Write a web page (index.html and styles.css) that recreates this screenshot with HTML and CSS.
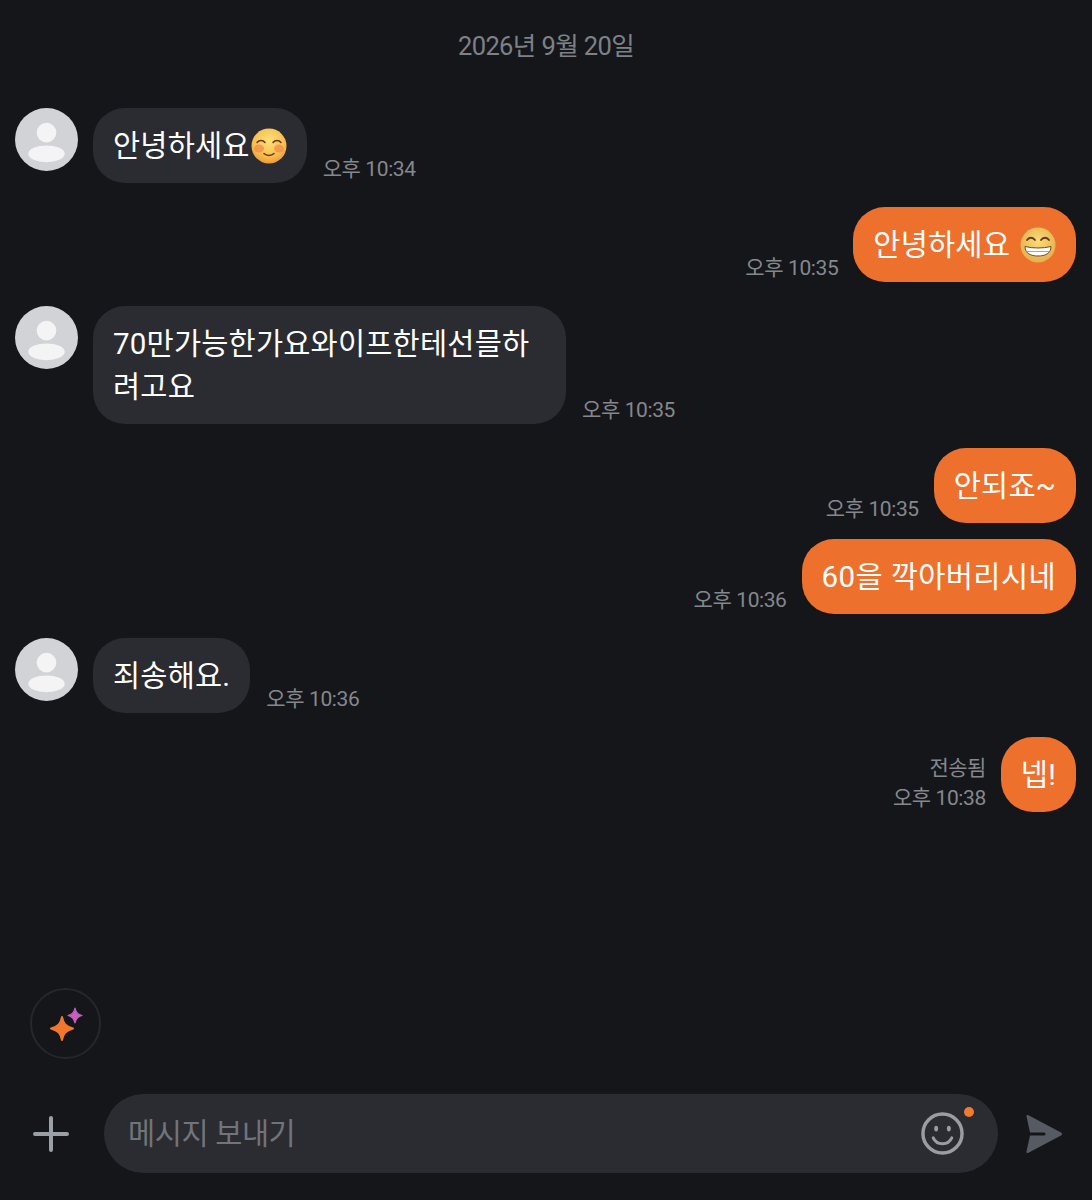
FILE: index.html
```html
<!DOCTYPE html>
<html lang="ko">
<head>
<meta charset="utf-8">
<title>채팅</title>
<link rel="stylesheet" href="styles.css">
</head>
<body>
<main class="chat">
  <div class="date">2026년 9월 20일</div>
  <section class="messages">
    <div class="row in">
      <svg class="avatar" viewBox="0 0 64 64"><circle cx="32" cy="32" r="32" fill="#d2d3d7"/><circle cx="32" cy="25" r="10" fill="#f4f4f5"/><ellipse cx="32" cy="46.500" rx="18.500" ry="8.500" fill="#f4f4f5"/></svg>
      <div class="bubble">안녕하세요<svg class="emoji" viewBox="0 0 36 36"><defs><radialGradient id="f1" cx="50%" cy="35%" r="65%"><stop offset="0" stop-color="#fde07a"/><stop offset=".7" stop-color="#f8bd4c"/><stop offset="1" stop-color="#ee9a38"/></radialGradient></defs><circle cx="18" cy="18" r="17.500" fill="url(#f1)"/><ellipse cx="8" cy="20.500" rx="5" ry="4" fill="#ef7d4e" opacity=".6"/><ellipse cx="28" cy="20.500" rx="5" ry="4" fill="#ef7d4e" opacity=".6"/><path d="M6 14.500c2-2.800 6-2.800 8 0M22 14.500c2-2.800 6-2.800 8 0M13 25.500c2.500 2.500 7.500 2.500 10 0" fill="none" stroke="#6b3a14" stroke-width="1.500" stroke-linecap="round"/></svg></div>
      <time class="time">오후 10:34</time>
    </div>
    <div class="row out">
      <time class="time">오후 10:35</time>
      <div class="bubble">안녕하세요<svg class="emoji" viewBox="0 0 36 36"><defs><radialGradient id="f2" cx="50%" cy="40%" r="60%"><stop offset="0" stop-color="#fbdc78"/><stop offset="1" stop-color="#e6ae4e"/></radialGradient></defs><circle cx="18" cy="18" r="17.500" fill="url(#f2)"/><path d="M5 19.500c8 2 18 2 26 0c0 7-6 9.500-13 9.500S5 26.500 5 19.500z" fill="#fff" stroke="#7a4a1c" stroke-width="1"/><path d="M6.500 24.500h23" stroke="#a9a39a" stroke-width="1"/><path d="M7 13c2-3 6-3 8 0M21 13c2-3 6-3 8 0" fill="none" stroke="#5f3a16" stroke-width="1.800" stroke-linecap="round"/></svg></div>
    </div>
    <div class="row in">
      <svg class="avatar" viewBox="0 0 64 64"><circle cx="32" cy="32" r="32" fill="#d2d3d7"/><circle cx="32" cy="25" r="10" fill="#f4f4f5"/><ellipse cx="32" cy="46.500" rx="18.500" ry="8.500" fill="#f4f4f5"/></svg>
      <div class="bubble wide">70만가능한가요와이프한테선믈하려고요</div>
      <time class="time">오후 10:35</time>
    </div>
    <div class="row out">
      <time class="time">오후 10:35</time>
      <div class="bubble">안되죠~</div>
    </div>
    <div class="row out tight">
      <time class="time">오후 10:36</time>
      <div class="bubble spread">60을 깍아버리시네</div>
    </div>
    <div class="row in">
      <svg class="avatar" viewBox="0 0 64 64"><circle cx="32" cy="32" r="32" fill="#d2d3d7"/><circle cx="32" cy="25" r="10" fill="#f4f4f5"/><ellipse cx="32" cy="46.500" rx="18.500" ry="8.500" fill="#f4f4f5"/></svg>
      <div class="bubble">죄송해요.</div>
      <time class="time">오후 10:36</time>
    </div>
    <div class="row out">
      <div class="meta"><span class="sent">전송됨</span><time class="time">오후 10:38</time></div>
      <div class="bubble">넵!</div>
    </div>
  </section>
  <button class="spark" type="button" aria-label="AI">
    <svg viewBox="0 0 36 36" width="36" height="36"><path d="M14 11c1.300 6.500 3.500 9.500 11 11.500c-7.500 2-9.700 5-11 11.500c-1.300-6.500-3.500-9.500-11-11.500C10.500 20.500 12.700 17.500 14 11z" fill="#f0772c" stroke="#f0772c" stroke-width="2" stroke-linejoin="round"/><path d="M27 2c.8 4 2.300 6.300 7 7.500c-4.700 1.200-6.200 3.500-7 7.500c-.8-4-2.300-6.300-7-7.500C24.700 8.300 26.200 6 27 2z" fill="#c85fc0" stroke="#c85fc0" stroke-width="1.200" stroke-linejoin="round"/></svg>
  </button>
  <footer class="composer">
    <svg class="plus" viewBox="0 0 36 36" width="36" height="36"><path d="M18 2v32M2 18h32" stroke="#9aa0a6" stroke-width="4" stroke-linecap="round"/></svg>
    <div class="input">
      <span class="placeholder">메시지 보내기</span>
      <span class="smile-wrap">
        <svg viewBox="0 0 44 44" width="43" height="43"><circle cx="22" cy="22" r="20" fill="none" stroke="#9a9da2" stroke-width="3.500"/><ellipse cx="15.500" cy="17" rx="2" ry="3" fill="#9a9da2"/><ellipse cx="28.500" cy="17" rx="2" ry="3" fill="#9a9da2"/><path d="M12.500 26.500c2 4.500 5.500 6 9.500 6s7.500-1.500 9.500-6" fill="none" stroke="#9a9da2" stroke-width="3" stroke-linecap="round"/></svg>
        <i class="dot"></i>
      </span>
    </div>
    <svg class="send" viewBox="0 0 38 40" width="38" height="40"><path d="M3 1l33 17.500a1.600 1.600 0 0 1 0 3L3 39c-1 .4-1.800-.4-1.500-1.400L5 21.500h14a1.500 1.500 0 0 0 0-3H5L1.500 2.500C1.200 1.400 2 .6 3 1z" fill="#565a62"/></svg>
  </footer>
</main>
</body>
</html>
```
FILE: styles.css
```css
* { box-sizing: border-box; }
html, body { margin: 0; padding: 0; background: #14161a; }
body {
  font-family: Roboto, "Noto Sans CJK KR", "Liberation Sans", sans-serif;
  color: #fff;
}
.chat {
  width: 1092px;
  height: 1200px;
  display: flex;
  flex-direction: column;
  overflow: hidden;
}
.date {
  margin-top: 29px;
  height: 34px;
  line-height: 34px;
  text-align: center;
  font-size: 25.500px;
  letter-spacing: -0.600px;
  color: #7e8186;
}
.messages {
  flex: 1;
  display: flex;
  flex-direction: column;
  gap: 24px;
  padding: 45px 16px 0 15px;
}
.row { display: flex; align-items: flex-end; }
.row.in { justify-content: flex-start; }
.row.out { justify-content: flex-end; }
.row.tight { margin-top: -8px; }
.avatar {
  width: 63px;
  height: 63px;
  align-self: flex-start;
  flex: none;
  margin-right: 15px;
}
.bubble {
  display: flex;
  align-items: center;
  min-height: 75px;
  padding: 17px 20px 15px;
  border-radius: 32px;
  background: #2a2c31;
  font-size: 29.500px;
  line-height: 43px;
  letter-spacing: 0.200px;
  white-space: pre;
}
.row.out .bubble { background: #ed712d; }
.bubble.spread { letter-spacing: 0.400px; }
.bubble.wide {
  display: block;
  width: 473px;
  white-space: normal;
  word-break: break-all;
}
.emoji { width: 36px; height: 36px; flex: none; margin-left: 1px; margin-top: -2px; }
.row.out .emoji { margin-left: 10px; }
.time {
  display: block;
  margin: 0 16px 0;
  height: 30px;
  line-height: 32px;
  font-size: 21px;
  letter-spacing: -0.400px;
  color: #85888c;
}
.row.out .time { margin: 0 15px 0 0; }
.meta {
  display: flex;
  flex-direction: column;
  align-items: flex-end;
}
.sent {
  height: 30px;
  line-height: 32px;
  font-size: 21px;
  letter-spacing: -0.500px;
  color: #85888c;
  margin-right: 15px;
}
.spark {
  flex: none;
  width: 71px;
  height: 71px;
  margin: 0 0 35px 30px;
  padding: 0;
  display: flex;
  align-items: center;
  justify-content: center;
  border: 2px solid #25272b;
  border-radius: 50%;
  background: transparent;
}
.composer {
  flex: none;
  display: flex;
  align-items: center;
  height: 79px;
  margin-bottom: 27px;
  padding-left: 33px;
}
.plus { flex: none; }
.input {
  flex: none;
  width: 894px;
  height: 79px;
  margin-left: 35px;
  padding: 0 34px 0 24px;
  display: flex;
  align-items: center;
  justify-content: space-between;
  border-radius: 40px;
  background: #2a2c31;
}
.placeholder {
  font-size: 29.500px;
  letter-spacing: -0.400px;
  line-height: 40px;
  color: #71747a;
}
.smile-wrap { position: relative; display: block; width: 43px; height: 43px; }
.smile-wrap svg { display: block; }
.dot {
  position: absolute;
  right: -10px;
  top: -5px;
  width: 10px;
  height: 10px;
  border-radius: 50%;
  background: #f07a2e;
}
.send { flex: none; margin-left: 27px; }
```
